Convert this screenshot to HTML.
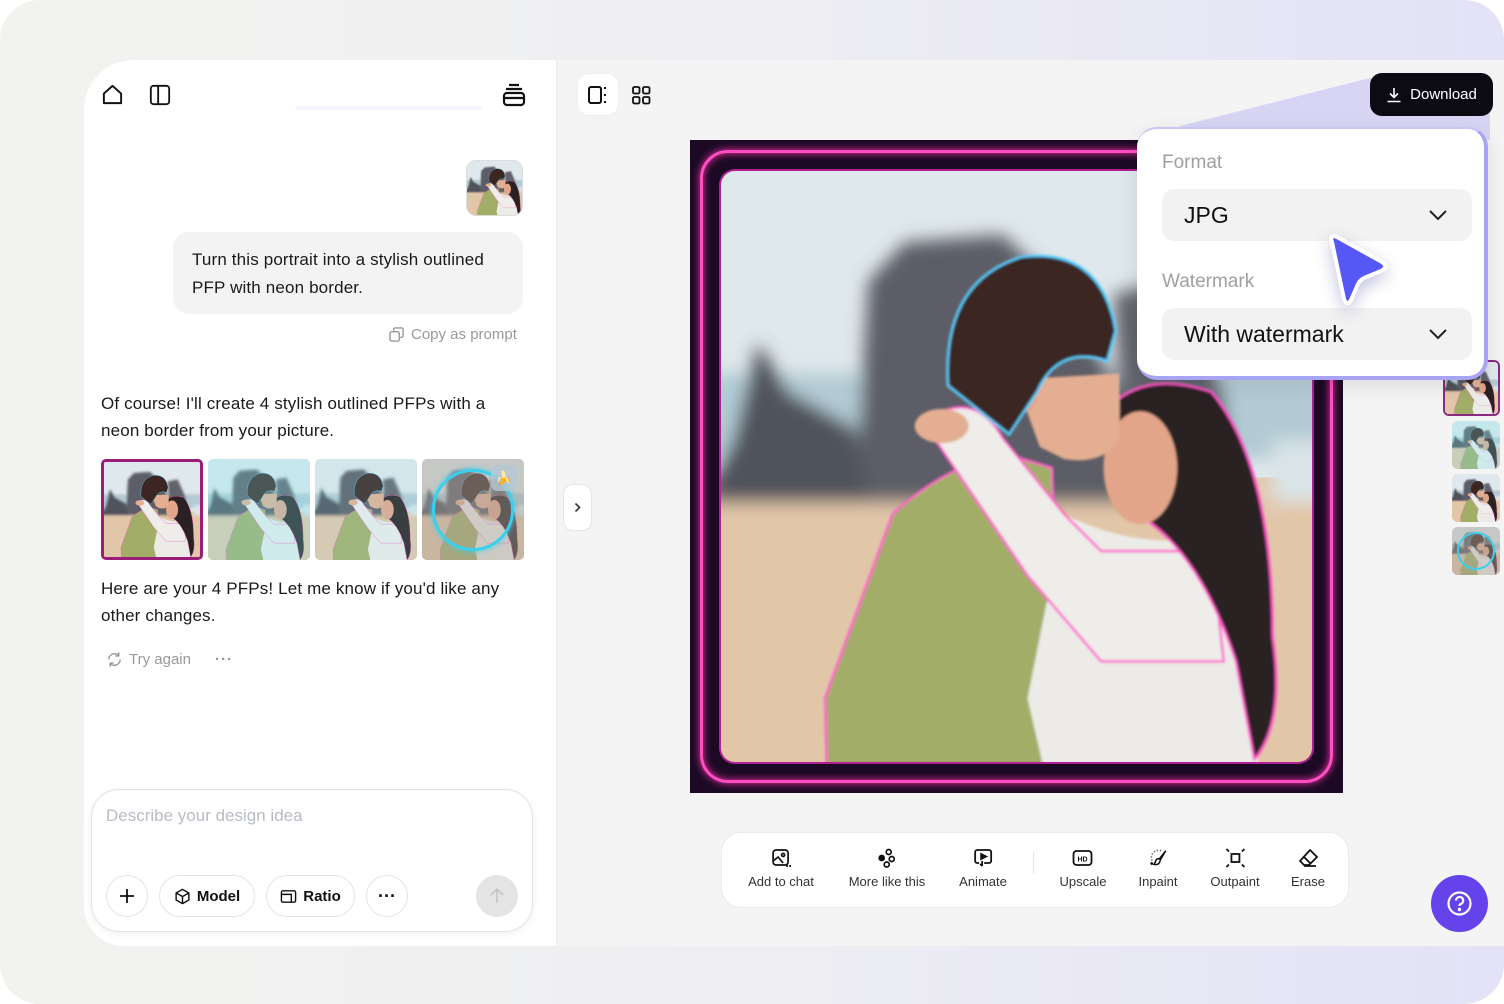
<!DOCTYPE html>
<html><head><meta charset="utf-8"><style>
*{box-sizing:border-box;margin:0;padding:0}
body{width:1504px;height:1004px;background:#fff;font-family:"Liberation Sans",sans-serif;overflow:hidden;position:relative;color:#111}
.outer{position:absolute;inset:0;border-radius:40px;background:linear-gradient(90deg,#f2f3ef 0%,#eeeef2 50%,#e3e2f7 100%)}
.left{position:absolute;left:84px;top:60px;width:472px;height:886px;background:#fff;border-top-left-radius:50px;border-bottom-left-radius:40px}
.right{position:absolute;left:556px;top:60px;width:948px;height:886px;background:#f4f4f4;border-left:1px solid #ececec}
.abs{position:absolute}
.txt{font-size:17px;line-height:27px;color:#1a1a1a;letter-spacing:.15px}
.pill{position:absolute;height:42px;border:1px solid #e4e4e4;border-radius:21px;background:#fff;display:flex;align-items:center;justify-content:center;font-size:15px;font-weight:bold;gap:6px}
.tool{position:absolute;top:848px;text-align:center;font-size:13px;color:#333;transform:translateX(-50%);white-space:nowrap}
.tool svg{display:block;margin:0 auto 6px;height:20px}
.sel{position:absolute;left:1162px;width:310px;height:52px;background:#f2f2f2;border-radius:12px;font-size:23px;color:#111;display:flex;align-items:center;padding-left:22px}
.sel svg{position:absolute;right:24px;top:20px}
.lab{position:absolute;left:1162px;font-size:19px;color:#a0a0a0}
</style></head><body>
<svg width="0" height="0" style="position:absolute"><defs>
<filter id="bl"><feGaussianBlur stdDeviation="7"/></filter>
<filter id="bl2"><feGaussianBlur stdDeviation="1"/></filter>
<symbol id="pic" viewBox="20 20 482 482" preserveAspectRatio="xMidYMid slice">
<rect x="0" y="0" width="653" height="653" fill="#e3c9ad"/>
<rect x="0" y="0" width="653" height="270" fill="#dfe8ec"/>
<g filter="url(#bl)">
<rect x="0" y="185" width="653" height="70" fill="#b3cbd4"/>
<path d="M130 280 L140 110 L170 78 L250 72 L300 120 L345 200 L365 300 L130 300Z" fill="#5b5d66"/>
<path d="M0 300 L30 240 L50 160 L75 200 L130 230 L140 300Z" fill="#50525c"/>
<path d="M340 120 L390 110 L430 200 L440 280 L350 280Z" fill="#62646c"/>
<rect x="470" y="240" width="183" height="160" fill="#d9e4e8"/>
<rect x="0" y="290" width="653" height="363" fill="#e2c6a8"/>
</g>
<g filter="url(#bl2)">
<path d="M160 300 Q200 262 250 250 L290 262 L305 653 L110 653 L105 450Z" fill="#a2ae68" stroke="#ff5ac8" stroke-width="2"/>
<path d="M300 300 Q360 330 425 318 L455 400 L460 570 L300 580 L270 450Z" fill="#ecebe8"/>
<path d="M185 225 Q225 195 250 238 L300 300 L330 330 L420 330 L430 420 L330 420 L270 350Z" fill="#eeedea" stroke="#ff5ac8" stroke-width="2"/>
<path d="M330 220 Q360 180 420 200 Q470 260 470 400 Q480 470 455 500 L440 420 Q410 330 360 300Z" fill="#2a2022" stroke="#ff5ac8" stroke-width="2"/>
<ellipse cx="362" cy="262" rx="30" ry="46" fill="#e3a58a"/>
<path d="M260 190 L345 185 L345 240 Q330 260 300 255 L280 245Z" fill="#e4ae92"/>
<ellipse cx="268" cy="200" rx="10" ry="16" fill="#dca184"/>
<path d="M205 195 Q200 110 265 90 Q330 82 342 150 L335 175 Q295 162 278 200 L255 235Z" fill="#3b2820" stroke="#5ad0ff" stroke-width="2"/>
<ellipse cx="200" cy="228" rx="22" ry="14" fill="#e4ae92"/>
<ellipse cx="395" cy="578" rx="25" ry="12" fill="#e0a486"/>
</g>
</symbol>
</defs></svg>
<div class="outer"></div>
<div class="left"></div>
<div class="right"></div>

<svg class="abs" style="left:101px;top:83px" width="23" height="23" viewBox="0 0 24 24" fill="none" stroke="#111" stroke-width="2" stroke-linejoin="round"><path d="M3 11 L12 3 L21 11 V21 H3Z"/></svg>
<svg class="abs" style="left:149px;top:84px" width="22" height="22" viewBox="0 0 24 24" fill="none" stroke="#111" stroke-width="2"><rect x="2" y="2" width="20" height="20" rx="3"/><path d="M10 2V22"/></svg>
<div class="abs" style="left:296px;top:106px;width:186px;height:4px;background:#f5f4fc;border-radius:2px"></div>
<svg class="abs" style="left:502px;top:83px" width="24" height="24" viewBox="0 0 24 24" fill="none" stroke="#111" stroke-width="2.2"><path d="M7 2H17M4 6H20"/><rect x="2" y="10" width="20" height="12" rx="3"/><path d="M2 15H22"/></svg>

<div class="abs" style="left:466px;top:160px;width:57px;height:56px;border-radius:10px;overflow:hidden;border:1px solid #ddd"><svg width="57" height="56"><use href="#pic"/></svg></div>
<div class="abs txt" style="left:173px;top:232px;width:350px;height:82px;background:#f3f3f3;border-radius:16px;padding:14px 19px;line-height:28px">Turn this portrait into a stylish outlined PFP with neon border.</div>
<div class="abs" style="left:389px;top:326px;font-size:15px;color:#999;display:flex;align-items:center;gap:7px"><svg width="15" height="15" viewBox="0 0 16 16" fill="none" stroke="#999" stroke-width="1.5"><rect x="1" y="5" width="10" height="10" rx="2"/><path d="M5 4V2.5A1.5 1.5 0 0 1 6.5 1H13.5A1.5 1.5 0 0 1 15 2.5V9.5A1.5 1.5 0 0 1 13.5 11H12"/></svg>Copy as prompt</div>

<div class="abs txt" style="left:101px;top:390px;width:400px">Of course! I'll create 4 stylish outlined PFPs with a neon border from your picture.</div>
<div class="abs" style="left:101px;top:459px;width:102px;height:101px;border-radius:5px;overflow:hidden;border:3px solid #9a1e78;box-shadow:inset 0 0 0 2px #e040a0"><svg width="96" height="95"><use href="#pic"/></svg></div>
<div class="abs" style="left:208px;top:459px;width:102px;height:101px;border-radius:5px;overflow:hidden"><svg width="102" height="101"><use href="#pic"/></svg><div class="abs" style="inset:0;background:rgba(120,230,240,.25)"></div></div>
<div class="abs" style="left:315px;top:459px;width:102px;height:101px;border-radius:5px;overflow:hidden"><svg width="102" height="101"><use href="#pic"/></svg><div class="abs" style="inset:0;background:rgba(140,230,240,.15)"></div></div>
<div class="abs" style="left:422px;top:459px;width:102px;height:101px;border-radius:5px;overflow:hidden;background:#a9a39a"><svg width="102" height="101" style="opacity:.55"><use href="#pic"/></svg><div class="abs" style="left:10px;top:10px;width:82px;height:82px;border-radius:50%;border:3px solid #38d0ee;box-shadow:0 0 6px #38d0ee"></div><div class="abs" style="left:69px;top:6px;width:26px;height:26px;border-radius:6px;background:rgba(180,200,210,.8);font-size:13px;text-align:center;line-height:26px">🍌</div></div>
<div class="abs txt" style="left:101px;top:575px;width:420px">Here are your 4 PFPs! Let me know if you'd like any other changes.</div>
<div class="abs" style="left:106px;top:651px;font-size:15px;color:#999;display:flex;align-items:center;gap:6px"><svg width="17" height="17" viewBox="0 0 24 24" fill="none" stroke="#999" stroke-width="2"><path d="M20 12A8 8 0 0 1 6 17.5M4 12A8 8 0 0 1 18 6.5M18 2V7H13M6 22V17H11"/></svg>Try again<span style="margin-left:18px;letter-spacing:1px;font-weight:bold">···</span></div>

<div class="abs" style="left:91px;top:789px;width:442px;height:143px;border:1px solid #e2e2e2;border-radius:28px;background:#fff;box-shadow:0 2px 8px rgba(0,0,0,.06)"></div>
<div class="abs" style="left:106px;top:806px;font-size:17px;color:#b8bcc4">Describe your design idea</div>
<div class="pill" style="left:106px;top:875px;width:42px"><svg width="18" height="18" viewBox="0 0 18 18" stroke="#111" stroke-width="1.8"><path d="M9 2V16M2 9H16"/></svg></div>
<div class="pill" style="left:159px;top:875px;width:96px"><svg width="17" height="17" viewBox="0 0 24 24" fill="none" stroke="#111" stroke-width="2" stroke-linejoin="round"><path d="M12 2L21 7V17L12 22L3 17V7Z"/><path d="M3 7L12 12L21 7M12 12V22"/></svg>Model</div>
<div class="pill" style="left:266px;top:875px;width:89px"><svg width="17" height="17" viewBox="0 0 24 24" fill="none" stroke="#111" stroke-width="2"><rect x="2" y="4" width="20" height="16" rx="2"/><path d="M2 9H16V20"/></svg>Ratio</div>
<div class="pill" style="left:366px;top:875px;width:42px;font-size:18px">···</div>
<div class="abs" style="left:476px;top:875px;width:42px;height:42px;border-radius:50%;background:#e4e4e4"><svg width="42" height="42" viewBox="0 0 42 42" fill="none" stroke="#c4c4c4" stroke-width="1.6"><path d="M21 28V14M15 20L21 14L27 20"/></svg></div>

<div class="abs" style="left:563px;top:484px;width:29px;height:47px;background:#fff;border:1px solid #e4e4e4;border-radius:10px"><svg width="27" height="45" viewBox="0 0 27 45" fill="none" stroke="#333" stroke-width="1.6"><path d="M11.5 18.5L15.5 22.5L11.5 26.5"/></svg></div>

<div class="abs" style="left:577px;top:73px;width:42px;height:43px;background:#fff;border-radius:12px;border:1px solid #eee"></div>
<svg class="abs" style="left:588px;top:85px" width="20" height="20" viewBox="0 0 20 20" fill="none" stroke="#111" stroke-width="2"><rect x="1" y="2" width="12" height="16" rx="2"/><path d="M17 2V4M17 9V11M17 16V18"/></svg>
<svg class="abs" style="left:632px;top:86px" width="19" height="19" viewBox="0 0 19 19" fill="none" stroke="#111" stroke-width="1.8"><rect x="1" y="1" width="6.5" height="6.5" rx="1.5"/><rect x="11" y="1" width="6.5" height="6.5" rx="1.5"/><rect x="1" y="11" width="6.5" height="6.5" rx="1.5"/><rect x="11" y="11" width="6.5" height="6.5" rx="1.5"/></svg>

<div class="abs" style="left:690px;top:140px;width:653px;height:653px;background:#1c0a24;overflow:hidden">
<div class="abs" style="left:10px;top:10px;width:633px;height:633px;border:3px solid #ff4fc0;border-radius:28px;box-shadow:0 0 8px #ff30b0,inset 0 0 8px #ff30b0"></div>
<div class="abs" style="left:31px;top:31px;width:591px;height:591px;border-radius:14px;overflow:hidden;box-shadow:0 0 0 2px #b02090"><svg width="591" height="591"><use href="#pic"/></svg></div>
</div>

<div class="abs" style="left:1443px;top:360px;width:57px;height:56px;border-radius:6px;border:2px solid #8a2a80;overflow:hidden"><svg width="53" height="52"><use href="#pic"/></svg></div>
<div class="abs" style="left:1452px;top:421px;width:48px;height:48px;border-radius:6px;overflow:hidden"><svg width="48" height="48"><use href="#pic"/></svg><div class="abs" style="inset:0;background:rgba(120,230,240,.25)"></div></div>
<div class="abs" style="left:1452px;top:474px;width:48px;height:48px;border-radius:6px;overflow:hidden"><svg width="48" height="48"><use href="#pic"/></svg></div>
<div class="abs" style="left:1452px;top:527px;width:48px;height:48px;border-radius:6px;overflow:hidden;background:#a9a39a"><svg width="48" height="48" style="opacity:.55"><use href="#pic"/></svg><div class="abs" style="left:5px;top:5px;width:38px;height:38px;border-radius:50%;border:2px solid #38d0ee"></div></div>

<svg class="abs" style="left:1170px;top:70px" width="330" height="70"><path d="M10 56 L200 8 L320 8 L320 70 L0 70Z" fill="#cfcdf3" opacity=".8"/></svg>
<div class="abs" style="left:1370px;top:73px;width:123px;height:43px;background:#0c0b14;border-radius:12px;color:#fff;font-size:15px;display:flex;align-items:center;justify-content:center;gap:8px"><svg width="16" height="16" viewBox="0 0 16 16" fill="none" stroke="#fff" stroke-width="1.6"><path d="M8 1V10M4 6.5L8 10.5L12 6.5M1.5 14.5H14.5"/></svg>Download</div>
<div class="abs" style="left:1137px;top:127px;width:351px;height:253px;background:#fff;border-radius:20px;border-right:4px solid #a8a4f4;border-bottom:4px solid #a8a4f4;border-top:2px solid #c8c6f5;box-shadow:0 6px 20px rgba(0,0,0,.1)"></div>
<div class="lab" style="top:152px">Format</div>
<div class="sel" style="top:189px">JPG<svg width="20" height="12" viewBox="0 0 20 12" fill="none" stroke="#222" stroke-width="2"><path d="M2 2L10 10L18 2"/></svg></div>
<div class="lab" style="top:271px">Watermark</div>
<div class="sel" style="top:308px">With watermark<svg width="20" height="12" viewBox="0 0 20 12" fill="none" stroke="#222" stroke-width="2"><path d="M2 2L10 10L18 2"/></svg></div>
<svg class="abs" style="left:1320px;top:228px;filter:drop-shadow(0 6px 8px rgba(60,60,150,.3))" width="75" height="82" viewBox="0 0 75 82"><path d="M12 14 Q9 6 17 9 L62 34 Q69 39 61 43 L44 50 Q40 52 38 56 L31 72 Q27 79 24 71Z" fill="#5558f5" stroke="#fff" stroke-width="4" stroke-linejoin="round"/></svg>

<div class="abs" style="left:721px;top:832px;width:628px;height:76px;background:#fff;border-radius:20px;border:1px solid #ebebeb"></div>
<div class="abs" style="left:1033px;top:852px;width:1px;height:22px;background:#e4e4e4"></div>
<div class="tool" style="left:781px"><svg width="20" height="20" viewBox="0 0 20 20" fill="none" stroke="#111" stroke-width="1.7"><rect x="2" y="2" width="15" height="15" rx="3"/><circle cx="12" cy="7" r="1.5"/><path d="M2 13L7 9L12 15"/><path d="M16 17V19M19 17V19"/></svg>Add to chat</div>
<div class="tool" style="left:887px"><svg width="20" height="20" viewBox="0 0 20 20" fill="none" stroke="#111" stroke-width="1.7"><circle cx="12" cy="4" r="2.5"/><circle cx="5" cy="10" r="2.5" fill="#111"/><circle cx="15" cy="11" r="2.5"/><circle cx="10" cy="16.5" r="2.5"/></svg>More like this</div>
<div class="tool" style="left:983px"><svg width="20" height="20" viewBox="0 0 20 20" fill="none" stroke="#111" stroke-width="1.8"><path d="M6 15H4A2 2 0 0 1 2 13V4A2 2 0 0 1 4 2H16A2 2 0 0 1 18 4V13A2 2 0 0 1 16 15H11"/><path d="M8 6L13 8.5L8 11Z" fill="#111"/><path d="M9 13V18M7 16L9 18"/></svg>Animate</div>
<div class="tool" style="left:1083px"><svg width="22" height="20" viewBox="0 0 22 20" fill="none" stroke="#111" stroke-width="1.8"><rect x="2" y="3" width="18" height="14" rx="3"/><text x="11" y="13.5" font-size="7" font-weight="bold" text-anchor="middle" fill="#111" stroke="none" font-family="Liberation Sans">HD</text></svg>Upscale</div>
<div class="tool" style="left:1158px"><svg width="22" height="20" viewBox="0 0 22 22" fill="none" stroke="#111" stroke-width="1.7"><path d="M4 14A8 8 0 0 1 14 3" stroke-dasharray="1.5 2" stroke="#666"/><path d="M19 3L12 12Q9 11 8 14Q7 17 6 18Q11 19 12 16Q13 14 13 13Z"/><path d="M2 17H5M3.5 15.5V18.5"/></svg>Inpaint</div>
<div class="tool" style="left:1235px"><svg width="20" height="20" viewBox="0 0 20 20" fill="none" stroke="#111" stroke-width="1.8"><rect x="6" y="6" width="8" height="8"/><path d="M1 1L3.5 3.5M19 1L16.5 3.5M1 19L3.5 16.5M19 19L16.5 16.5"/></svg>Outpaint</div>
<div class="tool" style="left:1308px"><svg width="20" height="20" viewBox="0 0 20 20" fill="none" stroke="#111" stroke-width="1.8" stroke-linejoin="round"><path d="M12 2L19 9L11 17H6L2 13Z"/><path d="M6 9L12 15M6 18H18"/></svg>Erase</div>

<div class="abs" style="left:1431px;top:875px;width:57px;height:57px;border-radius:50%;background:#6443ea"><svg width="57" height="57" viewBox="0 0 57 57" fill="none" stroke="#fff" stroke-width="2.2"><circle cx="28.5" cy="28.5" r="11"/><path d="M25 25.5A3.6 3.6 0 1 1 29.5 29Q28.5 29.6 28.5 31"/><circle cx="28.5" cy="34.5" r=".6" fill="#fff"/></svg></div>
</body></html>
